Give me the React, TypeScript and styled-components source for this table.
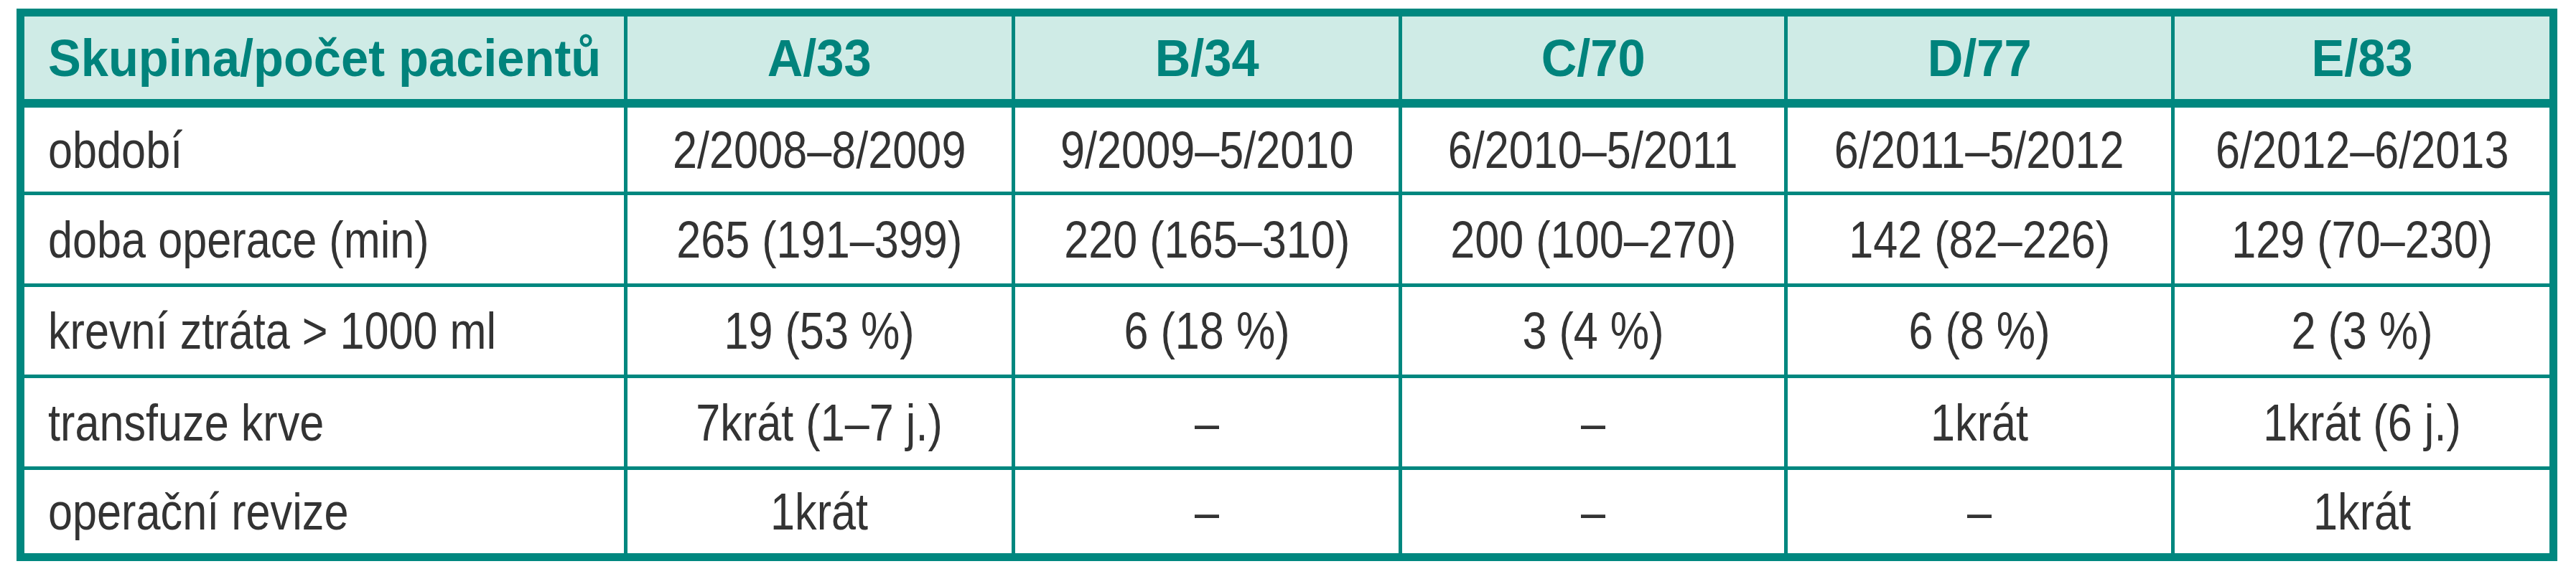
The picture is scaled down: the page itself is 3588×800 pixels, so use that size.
import React from 'react'
import styled, { createGlobalStyle } from 'styled-components'

const GlobalStyle = createGlobalStyle`
  html, body {
    margin: 0;
    padding: 0;
    background: #ffffff;
  }
`

const Page = styled.div`
  padding: 12px 0 0 23px;
`

const Table = styled.div`
  display: grid;
  grid-template-columns: 835px 535px 534px 532px 534px 522px;
  grid-template-rows: 122px 117px 123px 122px 123px 116px;
  gap: 5px;
  width: max-content;
  padding: 11px;
  background: #00877f;
`

const HeadCell = styled.div<{ $first?: boolean }>`
  display: flex;
  align-items: center;
  justify-content: ${p => (p.$first ? 'flex-start' : 'center')};
  margin-bottom: 7px;
  padding-left: ${p => (p.$first ? '33px' : '0')};
  background: #cfebe6;
  color: #00837c;
  font-family: 'Liberation Sans', Arial, sans-serif;
  font-weight: 700;
  font-size: 73px;
  line-height: 1;
  white-space: nowrap;
`

const Cell = styled.div<{ $first?: boolean }>`
  display: flex;
  align-items: center;
  justify-content: ${p => (p.$first ? 'flex-start' : 'center')};
  padding-left: ${p => (p.$first ? '33px' : '0')};
  background: #ffffff;
  color: #333333;
  font-family: 'Liberation Sans', Arial, sans-serif;
  font-size: 72px;
  line-height: 1;
  white-space: nowrap;
`

// the source table uses a condensed face, so squeeze the glyphs a bit
const Condensed = styled.span<{ $first?: boolean; $scale: number }>`
  display: inline-block;
  transform: scaleX(${p => p.$scale});
  transform-origin: ${p => (p.$first ? 'left center' : 'center center')};
`

const header = ['Skupina/počet pacientů', 'A/33', 'B/34', 'C/70', 'D/77', 'E/83']

const rows = [
  ['období', '2/2008–8/2009', '9/2009–5/2010', '6/2010–5/2011', '6/2011–5/2012', '6/2012–6/2013'],
  ['doba operace (min)', '265 (191–399)', '220 (165–310)', '200 (100–270)', '142 (82–226)', '129 (70–230)'],
  ['krevní ztráta > 1000 ml', '19 (53 %)', '6 (18 %)', '3 (4 %)', '6 (8 %)', '2 (3 %)'],
  ['transfuze krve', '7krát (1–7 j.)', '–', '–', '1krát', '1krát (6 j.)'],
  ['operační revize', '1krát', '–', '–', '–', '1krát'],
]

export default function App() {
  return (
    <>
      <GlobalStyle />
      <Page>
        <Table>
          {header.map((h, i) => (
            <HeadCell key={h} $first={i === 0}>
              <Condensed $first={i === 0} $scale={0.94}>
                {h}
              </Condensed>
            </HeadCell>
          ))}
          {rows.map(row =>
            row.map((c, i) => (
              <Cell key={row[0] + i} $first={i === 0}>
                <Condensed $first={i === 0} $scale={0.85}>
                  {c}
                </Condensed>
              </Cell>
            ))
          )}
        </Table>
      </Page>
    </>
  )
}
